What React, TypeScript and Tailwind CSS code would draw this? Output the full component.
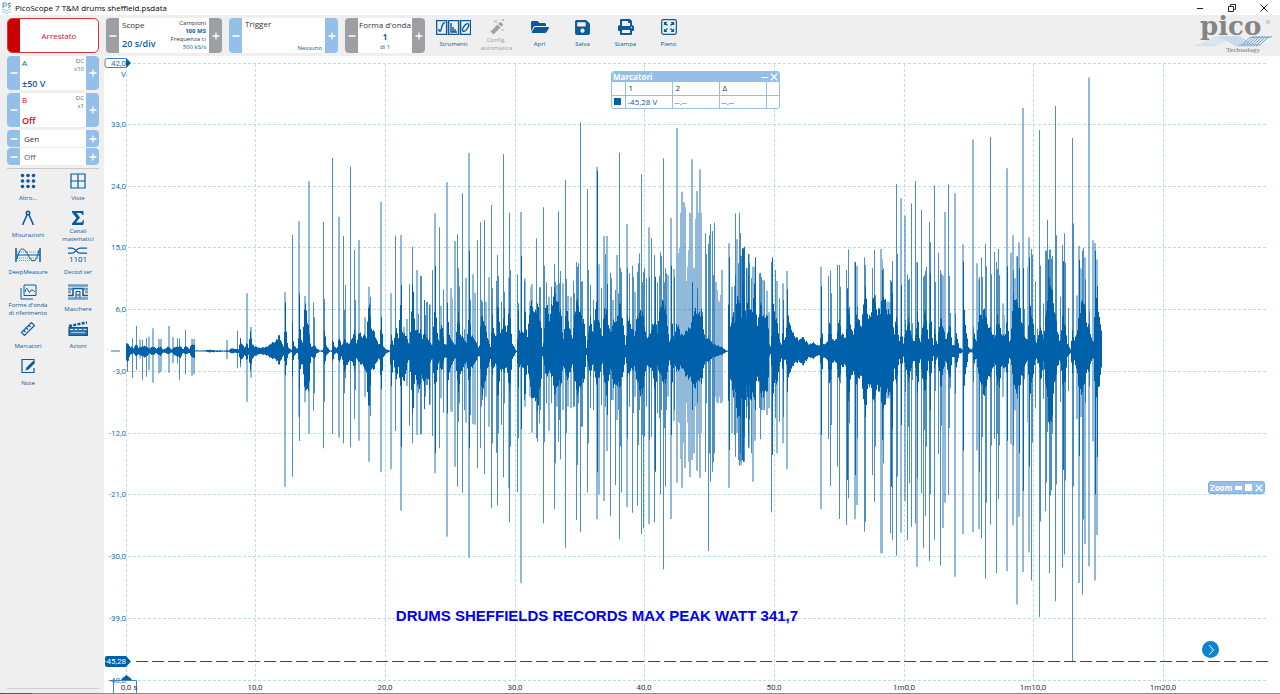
import type { ReactNode } from "react";
import { FaFolderOpen, FaPrint, FaSave } from "react-icons/fa";

type Trace = { x0: number; y0: number; sx: number; sy: number; mid: number; from: number; to: number; body: string; peaks: string };

// Each trace block holds "x top bottom" triples; peaks carry a weight: l(ight), m(edium) or d(ark).
const TRACES: Trace[] = [
  {
    x0: 100, y0: 230, sx: 3, sy: 3, mid: 363, from: 79, to: 990,
    body: "79 335 395,83 342 400,87 345 385,92 353 372,96 350 372,100 355 370,109 340 380,115 355 371,125 348 380,139 350 380,150 355 371,159 350 375,170 355 370,180 350 378,190 358 368,207 350 372,215 358 368,228 350 378,240 348 385,250 358 368,257 345 375,268 357 368,277 340 385,284 345 385,285 361 364,315 361 364,325 359 367,345 361 366,375 361 365,388 361 366,392 354 371,405 357 368,417 357 370,421 325 400,427 345 385,435 352 375,441 335 395,446 355 372,452 300 425,457 340 390,465 350 377,480 353 372,495 352 374,510 344 382,525 333 388,537 318 402,546 335 388,552 352 374,556 222 430,560 320 400,565 352 373,575 359 366,578 270 445,581 345 380,590 355 369,595 352 370,598 190 482,603 330 400,608 340 400,613 220 485,618 210 490,622 275 480,628 310 460,633 350 380,642 345 390,650 355 370,660 361 365,670 361 366,674 300 405,680 348 376,690 362 364,696 361 366,698 320 405,704 350 372,712 355 368,718 320 400,725 345 380,733 330 420,745 340 400,755 330 390,765 300 420,770 340 385,778 300 400,785 325 400,793 305 420,800 325 430,808 200 560,813 280 430,820 300 420,828 325 400,838 345 385,845 260 480,850 350 380,860 358 370,870 362 364,875 310 480,880 345 390,888 290 450,895 330 410,904 170 500,908 320 440,915 310 450,922 325 400,930 345 390,938 155 560,945 290 440,955 300 480,965 340 440,973 290 480,980 330 430,990 325 480",
    peaks: "82 340 425 m,97 325 443 m,109 288 420 m,121 328 385 l,126 330 450 m,139 325 440 m,147 320 420 l,159 295 458 l,178 327 430 l,183 327 425 l,207 288 428 l,219 322 400 l,231 325 400 m,238 325 450 m,256 300 433 m,275 327 437 l,282 327 433 l,382 330 388 l,413 302 415 m,421 325 412 m,441 190 515 l,452 290 443 l,555 187 770 l,577 15 740 m,597 -27 560 l,599 190 633 m,615 198 517 l,627 -147 611 l,641 217 542 m,642 262 490 m,671 -24 655 m,673 207 515 m,697 -216 611 m,716 -40 623 l,730 18 640 m,733 240 490 m,736 165 445 m,751 -190 652 m,763 60 567 m,765 210 480 m,777 30 632 l,795 262 500 l,807 170 695 l,811 200 558 m,843 -84 727 l,873 190 718 l,887 17 603 m,903 15 842 l,905 165 650 d,911 290 440 l,921 267 468 l,928 163 587 m,938 50 640 m,950 120 615 l,955 252 488 m,962 138 613 l,973 210 537 m,975 255 500 m,980 215 465 l,988 225 525 m",
  },
  {
    x0: 420, y0: 120, sx: 3, sy: 3, mid: 693, from: 0, to: 990,
    body: "0 650 740,3 620 770,8 680 710,12 665 735,18 655 740,23 680 710,28 660 740,38 675 715,45 540 820,52 630 760,58 670 720,64 600 760,72 668 718,80 672 714,83 560 810,88 650 750,97 660 735,107 675 712,115 570 820,122 640 770,130 655 740,140 670 725,149 540 830,153 650 740,165 655 735,178 690 700,182 600 760,187 570 850,195 620 780,205 660 740,212 680 720,217 590 760,223 640 740,229 660 720,233 520 870,240 630 760,247 640 740,253 540 770,258 640 740,265 600 770,270 560 830,276 665 725,288 692 695,292 690 697,294 550 830,299 630 740,310 640 740,315 560 840,322 650 740,330 560 790,340 560 850,352 560 860,365 620 780,367 680 710,372 660 720,378 540 770,388 590 760,397 550 770,406 510 830,415 540 800,425 600 780,430 660 740,438 560 770,446 610 770,458 650 740,468 550 800,475 540 830,485 590 790,495 620 770,500 690 700,504 640 740,512 600 760,520 640 730,527 540 790,537 600 780,547 650 730,553 570 780,562 580 830,572 640 740,580 610 790,590 590 810,600 560 790,610 600 770,618 690 700,622 590 770,630 600 760,645 650 740,652 580 790,662 570 830,672 600 790,680 650 740,690 650 740,697 610 750,705 590 840,712 640 740,722 540 770,732 550 790,742 600 770,750 680 710,755 600 800,762 660 730,770 600 760,780 640 740,795 640 760,810 620 780,820 580 800,835 570 790,845 580 780,855 650 730,870 660 720,885 675 710,905 680 705,915 689 698,922 693 695,924 690 697,926 500 900,930 620 780,935 620 770,940 560 850,945 620 800,950 520 900,955 560 860,960 520 930,964 600 830,970 470 960,975 570 850,980 590 800,985 530 840,990 560 800",
    peaks: "2 468 943 l,13 540 868 m,21 547 795 l,29 553 853 l,37 450 948 m,44 280 1060 l,46 437 1000 d,58 322 985 m,63 557 835 l,70 508 878 m,80 187 1250 l,82 548 880 d,92 505 875 l,97 535 875 l,104 363 1040 l,112 343 1100 m,115 445 905 m,118 500 850 m,126 220 1118 m,133 628 870 m,138 473 908 l,146 99 1313 l,148 392 985 d,151 540 885 m,158 463 912 l,165 518 914 l,172 360 1045 m,181 307 985 m,184 540 860 m,187 545 840 m,193 300 1063 m,199 545 830 l,207 472 920 l,214 255 1165 m,216 505 970 m,229 482 998 m,233 405 1157 m,235 468 940 m,245 545 915 m,250 103 1072 m,252 515 850 m,266 473 1105 l,269 278 1207 m,271 450 980 m,292 463 1117 m,295 550 955 m,303 276 1390 l,304 408 928 d,312 485 840 m,314 475 860 l,330 545 830 l,333 502 800 l,337 492 938 l,349 355 955 m,352 550 965 m,357 502 910 m,361 502 870 m,370 262 1210 m,373 437 967 m,379 487 850 m,387 530 932 l,395 500 850 m,403 432 1168 m,406 485 1030 m,410 495 860 l,415 274 965 m,417 490 900 m,421 453 1018 m,429 490 870 l,436 180 1283 m,438 477 940 m,445 528 860 l,453 530 865 l,461 482 860 m,464 520 860 m,469 427 1200 m,471 440 1035 m,475 430 850 m,481 7 1237 m,483 485 920 m,487 483 920 m,502 207 1117 m,505 450 970 m,511 495 865 m,520 540 870 m,530 140 1198 l,532 153 1057 d,537 433 1123 l,543 505 855 m,553 348 1143 l,555 403 860 m,560 348 993 l,562 492 885 d,571 458 1187 m,573 475 840 m,580 540 840 l,587 510 1095 m,591 405 900 l,594 520 870 m,598 98 1258 m,601 443 980 m,605 455 1117 m,620 312 1162 l,622 445 955 m,629 460 860 m,637 437 1178 m,640 470 880 m,646 515 830 l,653 455 1157 m,656 430 975 m,658 400 870 m,664 162 1242 m,667 487 945 m,670 455 1225 m,674 443 950 m,680 475 860 m,687 322 1213 l,688 470 960 m,694 355 950 m,703 405 1207 m,705 470 1055 d,712 487 880 m,718 468 895 m,722 397 1123 m,724 408 870 m,730 115 1348 m,733 487 925 m,737 445 1100 m,740 460 870 m,744 465 830 l,752 294 1197 l,754 437 945 d,761 447 903 l,764 472 870 m,770 24 1088 l,775 400 905 l,779 385 910 l,783 278 1017 l,787 215 1103 l,791 247 970 l,795 262 1043 l,799 483 850 l,803 440 908 l,807 390 1025 l,811 278 1072 l,815 118 1020 l,817 487 870 d,819 443 960 l,823 443 1000 l,827 297 860 l,831 213 1052 l,833 505 850 m,835 278 940 l,839 148 1073 l,843 278 940 l,847 575 770 m,856 340 1055 m,859 403 850 m,865 372 1293 m,868 345 1000 m,871 312 1085 m,877 333 1055 m,880 465 1027 m,883 308 1000 m,887 485 830 l,891 510 845 l,895 540 850 l,899 545 830 l,903 525 850 l,907 450 845 l,926 370 1103 l,927 412 990 d,937 500 940 l,942 497 945 m,945 465 1010 m,951 358 940 l,954 430 1020 m,958 278 1037 m,960 340 1000 m,963 407 1023 l,968 490 940 m,971 385 1025 d,974 380 950 m,980 445 860 l,985 465 940 m,988 402 985 l",
  },
  {
    x0: 740, y0: 180, sx: 3, sy: 3, mid: 512, from: 30, to: 570,
    body: "30 370 680,36 400 650,45 320 640,52 430 600,60 380 620,70 400 660,80 400 640,85 440 600,89 500 520,94 498 525,97 300 740,102 400 600,110 420 610,118 470 570,124 500 530,130 420 600,134 490 530,140 430 560,144 380 610,150 445 570,160 455 560,170 475 545,180 480 545,187 465 560,195 482 545,205 490 535,225 490 533,240 498 524,245 430 600,250 490 535,262 490 535,270 420 620,278 480 545,290 480 545,297 400 620,305 465 555,318 470 560,323 360 700,330 430 600,340 460 580,347 410 610,355 420 590,365 430 600,375 330 700,385 400 630,395 400 620,403 330 680,412 390 630,420 400 620,430 320 720,440 395 630,450 400 640,457 330 760,462 480 550,470 400 620,478 485 535,484 450 570,490 490 530,497 450 570,507 420 600,515 470 560,525 485 540,533 400 640,540 490 530,548 440 600,558 390 630,566 480 540,571 360 650",
    peaks: "-14 100 480 m,2 228 855 l,8 205 840 d,12 200 845 m,18 265 715 m,26 222 800 m,29 250 720 m,35 295 820 m,38 260 905 l,45 232 690 d,46 260 782 l,57 280 683 m,61 278 778 m,65 290 690 m,68 300 690 l,72 302 690 m,81 332 705 l,86 397 685 l,94 245 997 m,98 232 825 d,107 270 715 m,110 303 820 l,117 355 725 m,128 310 790 l,131 360 710 m,140 273 867 l,143 328 635 d,243 260 987 l,245 318 765 d,265 288 777 m,271 272 918 m,274 340 735 m,293 255 860 m,297 310 760 m,299 255 1017 m,301 320 610 m,319 270 1035 m,321 325 900 d,325 208 955 m,327 380 730 m,345 245 1018 l,346 247 885 d,350 258 975 l,352 380 775 m,373 232 1055 m,375 255 790 m,377 290 1025 m,398 265 885 m,403 210 965 m,405 345 800 m,424 207 1120 l,427 238 1120 l,428 270 780 d,431 265 850 m,442 365 655 l,446 365 655 l,451 300 1060 m,453 305 920 d,457 243 1080 m,469 12 1127 m,471 222 890 m,482 55 1058 l,484 315 735 d,494 107 962 l,496 420 635 m,502 283 1080 m,508 295 910 m,506 300 740 m,514 70 1040 m,517 430 600 m,527 3 1030 m,530 247 1160 l,533 247 895 m,544 90 940 m,550 290 1105 m,553 285 750 m,555 272 1007 m,559 260 800 m,569 125 1143 m",
  },
  {
    x0: 930, y0: 60, sx: 3, sy: 2.568, mid: 747, from: 0, to: 516,
    body: "0 600 860,5 690 790,10 738 756,14 680 800,22 735 760,28 680 800,33 660 850,40 680 800,47 720 770,55 700 800,60 660 840,66 730 765,75 735 760,78 690 800,88 738 755,98 744 750,101 600 870,108 690 800,116 740 752,127 744 750,132 700 780,140 725 765,148 640 830,158 660 840,166 640 860,175 680 820,185 700 800,195 710 780,203 660 830,208 680 840,215 700 790,225 710 790,233 660 800,240 735 760,250 620 820,260 600 870,270 640 830,282 700 800,292 725 765,300 620 870,308 660 820,318 735 760,328 690 790,333 680 840,340 725 765,347 650 840,355 580 900,365 580 940,372 620 850,380 680 800,390 730 765,398 650 840,405 680 830,412 725 765,422 743 752,427 700 800,433 720 770,442 690 810,450 640 860,462 600 850,470 680 800,480 690 790,490 730 760,497 600 880,503 610 860,508 650 850,513 680 800,516 720 770",
    peaks: "0 467 1115 m,1 547 900 d,13 322 1232 m,15 570 850 m,25 495 1012 m,31 540 1298 m,33 548 940 m,38 553 1202 l,44 390 1137 l,55 320 1117 m,57 555 945 m,60 650 842 m,74 342 1327 l,77 652 857 m,98 473 1218 l,100 518 1003 d,128 204 1212 l,130 685 827 m,140 522 1003 l,147 563 1205 l,149 557 1058 m,154 507 1228 m,157 557 968 m,167 472 1332 m,169 530 1137 m,181 198 1193 m,183 550 990 m,193 493 973 m,199 518 1317 m,202 537 960 m,206 485 1127 m,208 553 990 m,218 625 865 l,223 655 800 l,230 278 1313 l,233 530 978 d,242 495 987 l,249 450 1195 l,251 540 990 m,256 560 900 l,260 503 1398 l,263 505 870 m,266 468 1173 l,268 535 1010 d,278 123 1315 l,280 535 1107 d,283 640 820 m,293 530 930 l,297 455 1265 l,299 507 1043 d,304 485 1337 m,307 500 983 m,317 568 895 m,323 690 780 m,328 180 1430 m,331 528 1185 m,341 625 870 m,347 490 1158 m,349 490 1085 m,352 410 955 m,356 512 930 d,359 487 1317 m,361 487 1118 m,365 510 1105 m,368 503 960 m,376 118 1390 m,379 450 1090 m,391 608 878 m,397 475 1303 m,399 517 1053 d,403 445 1270 m,406 520 1080 m,415 637 850 m,427 200 1545 m,429 420 1095 m,440 605 922 l,446 477 1343 l,448 513 1017 d,453 535 917 l,457 490 1373 m,460 483 1180 m,464 507 1243 l,467 563 880 m,476 45 1300 l,478 645 838 m,488 463 980 l,495 470 1337 l,497 490 1115 d,501 512 1220 l,503 580 1020 d",
  },
];

const parse = (s: string) => s.split(",").map((p) => p.split(" "));

function bodyPath(t: Trace) {
  const pts = parse(t.body).map((p) => p.map(Number));
  const x1 = Math.round(t.x0 + t.from / t.sx);
  const x2 = Math.round(t.x0 + t.to / t.sx);
  let d = "";
  let i = 0;
  for (let x = x1; x < x2; x++) {
    const c = (x + 0.5 - t.x0) * t.sx;
    while (i < pts.length - 2 && pts[i + 1][0] < c) i++;
    const [ax, at, ab] = pts[i];
    const [bx, bt, bb] = pts[i + 1];
    const k = Math.min(1, Math.max(0, (c - ax) / (bx - ax)));
    const n = 0.85 + 0.3 * Math.abs(Math.sin(x * 12.9898) * Math.cos(x * 4.1));
    const up = (t.mid - (at + (bt - at) * k)) * n;
    const down = (ab + (bb - ab) * k - t.mid) * n;
    const top = t.y0 + (t.mid - up) / t.sy;
    const h = Math.max(1, (up + down) / t.sy);
    d += `M${x} ${top.toFixed(1)}h1v${h.toFixed(1)}h-1z`;
  }
  return d;
}

function peakPath(t: Trace, kind: string) {
  return parse(t.peaks)
    .filter((p) => p[3] === kind)
    .map(([x, a, b]) => {
      const w = kind === "l" ? 2 : 1;
      const px = kind === "l" ? Math.round(t.x0 + +x / t.sx - 1) : Math.floor(t.x0 + +x / t.sx);
      const top = t.y0 + +a / t.sy;
      return `M${px} ${top.toFixed(1)}h${w}V${(t.y0 + +b / t.sy).toFixed(1)}h-${w}z`;
    })
    .join("");
}

const Y_TICKS: [number, string][] = [
  [63, "42,0"], [124, "33,0"], [186, "24,0"], [247, "15,0"], [309, "6,0"], [371, "-3,0"],
  [433, "-12,0"], [494, "-21,0"], [556, "-30,0"], [618, "-39,0"], [680, "-48,0"],
];
const X_TICKS: [number, string][] = [
  [126, ""], [255, "10,0"], [385, "20,0"], [515, "30,0"], [644, "40,0"], [774, "50,0"],
  [904, "1m0,0"], [1033, "1m10,0"], [1163, "1m20,0"],
];

function Chart() {
  return (
    <svg viewBox="104 56 1176 637" className="block w-full bg-white font-['Roboto',sans-serif]" role="img" aria-label="Canale A">
      <g stroke="#b9e0e8" strokeWidth="1" strokeDasharray="3 2">
        {Y_TICKS.map(([y]) => <line key={y} x1="128" x2="1267" y1={y + 0.5} y2={y + 0.5} />)}
        {X_TICKS.map(([x]) => <line key={x} x1={x + 0.5} x2={x + 0.5} y1="64" y2="680" />)}
      </g>
      {TRACES.map((t) => (
        <g key={t.x0} fill="#0060aa">
          <path d={peakPath(t, "l")} opacity="0.43" />
          <path d={peakPath(t, "m")} opacity="0.7" />
          <path d={peakPath(t, "d")} opacity="0.95" />
          <path d={bodyPath(t)} />
        </g>
      ))}
      <rect x="111" y="350" width="9" height="2" fill="#8fbbdd" />
      <path d="M136 661.5H1268" stroke="#444" strokeWidth="1" strokeDasharray="12 4" />
      <g fontSize="8" fill="#1f6fae" textAnchor="end">
        <path d="M107 58.500h19l4 4.500-4 4.500h-19q-2 0-2-2v-5q0-2 2-2z" fill="#fff" stroke="#3d86bf" />
        <path d="M126 58l5 5-5 5z" fill="#0060aa" />
        {Y_TICKS.map(([y, s]) => <text key={y} x="126" y={y + 3}>{s}</text>)}
        <text x="126" y="77">V</text>
      </g>
      <path d="M109 680.500h16M113.500 693v-12.500h23V693" fill="none" stroke="#3d86bf" />
      <path d="M121 680q1-2 3-3l2.500-2 2.500 2q2 1 3 3z" fill="#0060aa" />
      <path d="M107 656h19l5 5.500-5 5.500h-19q-2 0-2-2v-7q0-2 2-2z" fill="#0060aa" />
      <text x="126" y="664" fontSize="8" fill="#fff" textAnchor="end">-45,28</text>
      <g fontSize="8" fill="#333" textAnchor="middle">
        <text x="129" y="690">0,0 s</text>
        {X_TICKS.slice(1).map(([x, s]) => <text key={x} x={x} y="690">{s}</text>)}
      </g>
      <text x="597" y="621" textAnchor="middle" fontSize="15" fill="#0000f0" className="font-['Liberation_Sans',sans-serif] font-bold">
        DRUMS SHEFFIELDS RECORDS MAX PEAK WATT 341,7
      </text>
    </svg>
  );
}

function Step({ plus, gray, label }: { plus?: boolean; gray?: boolean; label: string }) {
  return (
    <button type="button" aria-label={label} className={`flex w-[13px] shrink-0 items-center justify-center ${gray ? "bg-[#9d9fa2]" : "bg-[#94bfe8]"}`}>
      <svg viewBox="0 0 8 8" className="size-2" stroke="#fff" strokeWidth="1.300">
        <path d={plus ? "M0.500 4h7M4 0.500v7" : "M0.500 4h7"} />
      </svg>
    </button>
  );
}

function Stepper({ name, gray, className, children }: { name: string; gray?: boolean; className: string; children: ReactNode }) {
  return (
    <div className={`flex shrink-0 overflow-hidden rounded-[4px] bg-white ${className}`}>
      <Step gray={gray} label={`${name} -`} />
      <div className="min-w-0 flex-1">{children}</div>
      <Step plus gray={gray} label={`${name} +`} />
    </div>
  );
}

function Channel({ name, range, mult, red }: { name: string; range: string; mult: string; red?: boolean }) {
  return (
    <Stepper name={name} className="h-[34px]">
      <div className={`flex h-full justify-between pl-[2px] pr-[2px] ${red ? "text-[#e4002b]" : "text-[#0b5a9b]"}`}>
        <div className="flex flex-col justify-between text-[9px] leading-[13px]">
          <span className="text-[8px]">{name}</span>
          <span className="font-semibold">{range}</span>
        </div>
        <div className="pt-px text-right text-[6px] leading-[8px] text-[#3c6587]">
          <div>DC</div>
          <div>{mult}</div>
        </div>
      </div>
    </Stepper>
  );
}

function Tool({ label, children }: { label: string; children: ReactNode }) {
  return (
    <button type="button" className="flex h-[37px] flex-col items-center justify-start text-[#0b5a9b]">
      <span className="flex h-4 items-center">{children}</span>
      <span className="flex h-[18px] items-center whitespace-pre text-center text-[6px] leading-[8px]">{label}</span>
    </button>
  );
}

function TopTool({ label, muted, children }: { label: string; muted?: boolean; children: ReactNode }) {
  return (
    <button type="button" className={`flex w-[43px] shrink-0 flex-col items-center ${muted ? "text-[#a2a2a2]" : "text-[#0b5a9b]"}`}>
      <span className="flex h-[18px] items-center">{children}</span>
      <span className="flex h-4 items-center whitespace-pre text-center text-[6px] leading-[8px]">{label}</span>
    </button>
  );
}

const S = { fill: "none", stroke: "currentColor" };

function Logo() {
  return (
    <div className="ml-auto h-[38px] w-[82px] shrink-0">
      <svg viewBox="0 0 82 38" className="h-[38px] w-[82px] overflow-visible" role="img" aria-label="pico Technology">
        <g fill="none" strokeWidth="0.800">
          {[0, 1, 2, 3, 4, 5, 6].map((i) => (
            <g key={i}>
              <path d={`M${1 + i * 3} 28q8-2 12-5t13-5`} stroke="#c5dcf0" />
              <path d={`M${26 + i * 3} 18.500l17 9.500`} stroke="#9fc4e4" />
              <path d={`M${44 + i * 3} 28q5-1 8-5t8-4.500`} stroke="#4f8db9" />
            </g>
          ))}
        </g>
        <text x="6" y="17" fontSize="26" fill="#858585" fontFamily="DejaVu Serif, serif" fontWeight="700">pico</text>
        <circle cx="74" cy="4" r="1.500" fill="none" stroke="#999" strokeWidth="0.600" />
        <text x="32" y="34" fontSize="7" fill="#999" fontFamily="Liberation Serif, serif" fontWeight="700">Technology</text>
      </svg>
    </div>
  );
}

export default function App() {
  return (
    <div className="flex min-h-screen flex-col bg-[#efefef] font-['Open_Sans','Noto_Sans',sans-serif] text-[#333]">
      <header className="flex h-[15px] shrink-0 items-center bg-white pl-px pr-3 text-[8px] leading-[15px] text-black">
        <svg viewBox="0 0 12 13" className="mr-[2px] h-[13px] w-3" fill="none" stroke="#3c86b5" strokeWidth="0.900">
          <path d="M2 7V2h2q1.500 0 1.500 1.400T4 5H2M10 2.500Q7 1 7 3t2 1.500Q11 6 7 6.500" />
          <path d="M1 9q1.500-2 3 0t3 0 3 0M1 11.500q1.500-2 3 0t3 0 3 0" stroke="#8bbbdc" />
        </svg>
        <h1 className="flex-1">PicoScope 7 T&amp;M drums sheffield.psdata</h1>
        <div className="flex gap-6">
          <button type="button" aria-label="Riduci"><svg viewBox="0 0 8 8" className="size-2" stroke="#222" fill="none"><path d="M1 4.500h6" /></svg></button>
          <button type="button" aria-label="Ripristina"><svg viewBox="0 0 8 8" className="size-2" stroke="#222" fill="none"><path d="M.5 2.500h5v5h-5zM2.500 2.500v-2h5v5h-2" /></svg></button>
          <button type="button" aria-label="Chiudi"><svg viewBox="0 0 8 8" className="size-2" stroke="#222" fill="none"><path d="M.5.5l7 7M7.500.5l-7 7" /></svg></button>
        </div>
      </header>

      <div className="flex h-[41px] shrink-0 items-start gap-[7px] pl-[7px] pr-1 pt-[3px]">
        <button type="button" className="flex h-[35px] w-[92px] shrink-0 overflow-hidden rounded-[5px] border border-[#d9363e] bg-white text-[8px] text-[#d40f1c]">
          <span className="h-full w-3 bg-[#c80000]" />
          <span className="flex h-full flex-1 items-center justify-center">Arrestato</span>
        </button>
        <Stepper name="Scope" gray className="h-[35px] w-[116px]">
          <div className="flex h-full justify-between pl-[3px] pr-[3px]">
            <div className="flex flex-col justify-between text-[9px] leading-[13px]">
              <span className="text-[8px]">Scope</span>
              <span className="pb-[3px] font-semibold whitespace-nowrap text-[#0b5a9b]">20 s/div</span>
            </div>
            <div className="whitespace-nowrap pt-px text-right text-[6px] leading-[8px]">
              <div>Campioni</div>
              <div className="font-bold text-[#0b5a9b]">100 MS</div>
              <div>Frequenza cı</div>
              <div className="text-[#0b5a9b]">500 kS/s</div>
            </div>
          </div>
        </Stepper>
        <Stepper name="Trigger" className="h-[35px] w-[109px]">
          <div className="flex h-full flex-col justify-between px-[3px] text-[8px] leading-[12px]">
            <span>Trigger</span>
            <span className="text-right text-[6px] leading-[10px] text-[#0b5a9b]">Nessuno</span>
          </div>
        </Stepper>
        <Stepper name="Forma d'onda" gray className="h-[35px] w-[80px]">
          <div className="flex h-full flex-col items-center pt-px whitespace-nowrap text-[8px] leading-[12px]">
            <span>Forma d'onda</span>
            <span className="font-bold text-[#0b5a9b]">1</span>
            <span className="text-[6px] leading-[8px] text-[#0b5a9b]">di 1</span>
          </div>
        </Stepper>
        <div className="flex">
          <TopTool label="Strumenti">
            <svg viewBox="0 0 35 15" className="h-[15px] w-[35px]" {...S} strokeWidth="1.400">
              <path d="M.6.6h10v13.800H.6zM12.600.6h10v13.800h-10zM24.600.6h10v13.800h-10z" />
              <path d="M2.500 9q1.500 5 3-1t3.500-5M15 3v9h6M17 12V7M19 12V9" />
              <ellipse cx="29.600" cy="7.500" rx="2" ry="4.500" transform="rotate(35 29.600 7.500)" />
            </svg>
          </TopTool>
          <TopTool label={"Config.\nautomatica"} muted>
            <svg viewBox="0 0 16 16" className="size-4" fill="currentColor">
              <path d="M1.500 12.500l7-7 3 3-7 7zM9.300 4.800l2-2 3 3-2 2z" />
              <path d="M5 1l3 3M8 1L5 4M13 0l2 2M15 0l-2 2M12.500 10l2 2M14.500 10l-2 2" stroke="currentColor" strokeWidth="0.700" />
            </svg>
          </TopTool>
          <TopTool label="Apri"><FaFolderOpen size={18} /></TopTool>
          <TopTool label="Salva"><FaSave size={17} /></TopTool>
          <TopTool label="Stampa"><FaPrint size={16} /></TopTool>
          <TopTool label="Pieno">
            <svg viewBox="0 0 16 16" className="size-4" {...S} strokeWidth="1.200">
              <rect x=".7" y=".7" width="14.600" height="14.600" rx="1.500" />
              <path d="M3.500 6V3.500H6M3.500 3.500L6.500 6.500M10 3.500h2.500V6M12.500 3.500l-3 3M3.500 10v2.500H6M3.500 12.500l3-3M12.500 10v2.500H10M12.500 12.500l-3-3" />
            </svg>
          </TopTool>
        </div>
        <Logo />
      </div>

      <div className="flex flex-1 items-stretch">
        <aside className="flex w-[104px] shrink-0 flex-col pl-[7px] pr-[5px]">
          <div className="flex flex-col gap-[3px]">
            <Channel name="A" range="±50 V" mult="x10" />
            <Channel name="B" range="Off" mult="x1" red />
            <div className="flex flex-col gap-px">
              <Stepper name="Gen" className="h-[17px]"><span className="block pl-[4px] text-[8px] leading-[17px]">Gen</span></Stepper>
              <Stepper name="Stato Gen" className="h-[17px]"><span className="block pl-[4px] text-[8px] leading-[17px] text-[#3c6587]">Off</span></Stepper>
            </div>
          </div>
          <div className="mt-[3px] border-t border-[#c8c8c8]" />
          <nav className="-mx-1 mt-1 grid grid-cols-2">
            <Tool label="Altro...">
              <svg viewBox="0 0 16 16" className="size-4" fill="currentColor">
                {[2.500, 8, 13.500].map((y) => [2.500, 8, 13.500].map((x) => <circle key={`${x}-${y}`} cx={x} cy={y} r="1.800" />))}
              </svg>
            </Tool>
            <Tool label="Viste">
              <svg viewBox="0 0 16 16" className="size-4" {...S} strokeWidth="1.200"><path d="M1 1h14v14H1zM8 1v14M1 8h14" /></svg>
            </Tool>
            <Tool label="Misurazioni">
              <svg viewBox="0 0 16 16" className="size-4" {...S} strokeWidth="1.600"><circle cx="8" cy="3" r="1.700" /><path d="M7 5l-4.500 10M9 5l4.500 10" /></svg>
            </Tool>
            <Tool label={"Canali\nmatematici"}>
              <svg viewBox="0 0 16 16" className="size-4" fill="currentColor"><path d="M2 1h11.500v4h-1q-.5-2-2.500-2H6.500L10 7.500 6 12.500h4.500q2 0 2.500-2.500h1l-.7 5H2v-1.500L6.500 8 2 2.500z" /></svg>
            </Tool>
            <Tool label="DeepMeasure">
              <svg viewBox="0 0 26 16" className="h-4 w-[26px]" {...S}>
                <path d="M1 1v14M25 1v14" strokeWidth="1.500" />
                <path d="M1 8h24M2 12q4-18 11-4t11-5" />
                <path d="M2 5h22M2 11h22M4 13.500h18" strokeDasharray="1 1" opacity=".6" />
              </svg>
            </Tool>
            <Tool label="Decod ser">
              <svg viewBox="0 0 20 16" className="h-4 w-5" {...S} strokeWidth="1.300">
                <path d="M0 1.200h4q2 0 4 2.500t4 2.500h7M0 6.200h4q2 0 4-2.500t4-2.500h7" />
                <text x="10" y="15" fontSize="8" textAnchor="middle" fill="currentColor" stroke="none" fontFamily="Roboto, sans-serif">1101</text>
              </svg>
            </Tool>
            <Tool label={"Forme d'onda\ndi riferimento"}>
              <svg viewBox="0 0 17 16" className="h-4 w-[17px]" {...S}><path d="M4 1h12v10.500H4zM1 4v11h12M5 8q1.500-6 3-2t2 2 2-2 3 2" /></svg>
            </Tool>
            <Tool label="Maschere">
              <svg viewBox="0 0 20 16" className="h-4 w-5" {...S}>
                <path d="M0 1.500h20M0 5h4M16 5h4M0 8h3M17 8h3M8 11h4M0 14.500h20" strokeWidth="2.500" opacity=".55" />
                <path d="M0 11.500h5V4.500h10v7h5" strokeWidth="1.500" />
                <path d="M8 14V7.500h4V14" />
              </svg>
            </Tool>
            <Tool label="Marcatori">
              <svg viewBox="0 0 16 16" className="size-4" {...S} strokeWidth="1.200"><path d="M1.500 11.500L11.500 1.500l3 3-10 10zM4 9.500l1.500 1.500M6.500 7L8 8.500M9 4.500L10.500 6" /></svg>
            </Tool>
            <Tool label="Azioni">
              <svg viewBox="0 0 20 16" className="h-4 w-5" {...S} strokeWidth="1.200">
                <path d="M1 6.500h18.400v8H1z" fill="currentColor" fillOpacity=".85" />
                <path d="M1 5l18-3.500" strokeWidth="2.500" strokeDasharray="3 1.300" />
                <path d="M2 8.500h16.500" stroke="#efefef" strokeDasharray="3 1.500" />
                <path d="M3 11.500h14" stroke="#9fc4e4" />
              </svg>
            </Tool>
            <Tool label="Note">
              <svg viewBox="0 0 16 16" className="size-4" {...S} strokeWidth="1.200"><path d="M14 5V1.500H2v13h7M14 10v4.500H9" /><path d="M5.500 12.500l1-3L13 3l2 2-6.500 6.500z" fill="currentColor" stroke="none" /></svg>
            </Tool>
          </nav>
          <div className="mb-1 mt-auto border-t border-[#d0d0d0]" />
        </aside>

        <main className="relative min-w-0 flex-1 bg-white">
          <Chart />
          <section className="absolute left-[507px] top-[15px] w-[169px] overflow-hidden rounded-[3px] border border-[#94bfe8] bg-white text-[8px]">
            <div className="flex h-[10px] items-center bg-[#94bfe8] pl-px pr-px text-white">
              <h2 className="flex-1 font-bold leading-[10px]">Marcatori</h2>
              <button type="button" aria-label="Riduci marcatori"><svg viewBox="0 0 10 8" className="h-2 w-[10px]" stroke="#fff"><path d="M1 4.500h7" /></svg></button>
              <button type="button" aria-label="Chiudi marcatori"><svg viewBox="0 0 8 8" className="size-2" stroke="#fff" strokeWidth="1.300"><path d="M.8.8l6.400 6.400M7.200.8L.8 7.200" /></svg></button>
            </div>
            <table className="w-full table-fixed border-collapse text-left leading-[12px] [&_td]:p-0 [&_td]:pl-[2px] [&_th]:p-0 [&_th]:pl-[3px] [&_th]:font-normal">
              <colgroup><col className="w-[13px]" /><col className="w-[47px]" /><col className="w-[47px]" /><col /><col className="w-[13px]" /></colgroup>
              <thead>
                <tr className="h-[13px] divide-x divide-[#94bfe8] border-b border-[#94bfe8]"><th /><th>1</th><th>2</th><th>Δ</th><th /></tr>
              </thead>
              <tbody>
                <tr className="h-[13px] divide-x divide-[#94bfe8]">
                  <td><span className="block size-[7px] bg-[#0060aa]" /></td>
                  <td className="text-[#0b5a9b]">-45,28 V</td>
                  <td className="text-[#0b5a9b]">--.--</td>
                  <td>--.--</td>
                  <td />
                </tr>
              </tbody>
            </table>
          </section>
          <div className="absolute right-[15px] top-[425px] flex h-[13px] w-[57px] items-center gap-[3px] rounded-[3px] border border-[#7db0e0] bg-[#94bfe8] px-px text-[8px] font-bold leading-[11px] text-white">
            <span className="flex-1">Zoom</span>
            <button type="button" aria-label="Riduci zoom" className="h-1 w-[7px] bg-white" />
            <button type="button" aria-label="Espandi zoom" className="size-[7px] bg-white" />
            <button type="button" aria-label="Chiudi zoom"><svg viewBox="0 0 8 8" className="size-2" stroke="#fff" strokeWidth="1.300"><path d="M.8.8l6.400 6.400M7.200.8L.8 7.200" /></svg></button>
          </div>
          <button type="button" aria-label="Avanti" className="absolute right-[61px] top-[585px] flex size-[17px] items-center justify-center rounded-full bg-[#0a84d0]">
            <svg viewBox="0 0 10 12" className="h-3 w-[10px]" stroke="#fff" fill="none"><path d="M3 1l4.500 5L3 11" /></svg>
          </button>
        </main>
      </div>
      <div className="flex h-px shrink-0 bg-[#8a8a8a]"><span className="w-8 bg-[#555]" /></div>
    </div>
  );
}
